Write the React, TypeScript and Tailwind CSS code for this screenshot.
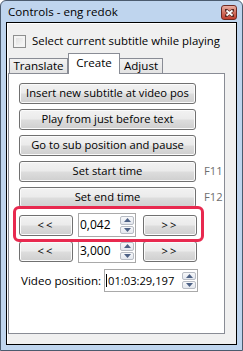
import React from "react";

const btnFace =
  "flex items-center justify-center rounded-[3px] border border-[#707070] bg-[linear-gradient(to_bottom,#f2f2f2_0%,#ebebeb_48%,#dddddd_52%,#cfcfcf_100%)] shadow-[inset_0_0_0_1px_#fbfbfb] text-black";

const WinButton = ({ children, className = "" }: { children: React.ReactNode; className?: string }) => (
  <div className={`${btnFace} ${className}`}>{children}</div>
);

const Spin = ({ className = "" }: { className?: string }) => (
  <div className={`flex flex-col gap-[1px] w-[14px] ${className}`}>
    <div className="flex-1 flex items-center justify-center rounded-[2px] border border-[#b8bcc4] bg-[linear-gradient(to_bottom,#f7f8fa,#e3e7ee)]">
      <svg width="7" height="4" viewBox="0 0 7 4">
        <path d="M0 4 L3.5 0 L7 4 Z" fill="#4d6185" />
      </svg>
    </div>
    <div className="flex-1 flex items-center justify-center rounded-[2px] border border-[#b8bcc4] bg-[linear-gradient(to_bottom,#f7f8fa,#e3e7ee)]">
      <svg width="7" height="4" viewBox="0 0 7 4">
        <path d="M0 0 L7 0 L3.5 4 Z" fill="#4d6185" />
      </svg>
    </div>
  </div>
);

const NumBox = ({ value, className = "" }: { value: string; className?: string }) => (
  <div className={`flex items-stretch justify-between border border-[#a9a9a9] bg-white pl-[1px] pr-[1px] py-[2px] ${className}`}>
    <span className="flex items-center leading-none text-[12px]">{value}</span>
    <Spin />
  </div>
);

const ShortcutRow = ({ label, keyName }: { label: string; keyName: string }) => (
  <div className="flex items-center">
    <WinButton className="w-[177px] h-[21px]">{label}</WinButton>
    <span className="ml-[8px] text-[#6e6e6e]">{keyName}</span>
  </div>
);

const StepRow = ({ value }: { value: string }) => (
  <div className="flex items-center">
    <WinButton className="w-[54px] h-[21px] tracking-[2px]">&lt;&lt;</WinButton>
    <NumBox value={value} className="ml-[5px] w-[58px] h-[24px]" />
    <WinButton className="ml-[7px] w-[54px] h-[21px] tracking-[2px]">&gt;&gt;</WinButton>
  </div>
);

export default function App() {
  return (
    <div className="w-[243px] h-[351px] flex flex-col border border-[#4b5b6e] rounded-t-[6px] bg-[#bfd5ee] px-[5px] pb-[5px] font-['Open_Sans',sans-serif] text-[11.2px] text-black">
      {/* title bar */}
      <div className="h-[21px] flex items-start justify-between">
        <span className="pl-[2px] pt-[3px] leading-[16px] text-[11.6px]">Controls - eng redok</span>
        <div className="mt-[4px] w-[16px] h-[15px] rounded-[3px] border border-[#6f2a22] bg-[linear-gradient(to_bottom,#eab0a4,#d0705f_50%,#c2402f)] flex items-center justify-center">
          <svg width="9" height="8" viewBox="0 0 9 8">
            <path d="M1 1 L8 7 M8 1 L1 7" stroke="#5a2a24" strokeWidth="3.2" strokeLinecap="square" />
            <path d="M1.5 1.5 L7.5 6.5 M7.5 1.5 L1.5 6.5" stroke="#ffffff" strokeWidth="1.8" />
          </svg>
        </div>
      </div>

      {/* client area */}
      <div className="flex-1 flex flex-col border border-black bg-[#f0f0f0] shadow-[inset_1px_1px_0_#ffffff]">
        <div className="mt-[11px] ml-[6px] flex items-center">
          <div className="w-[13px] h-[13px] border border-[#8e8f8f] bg-[linear-gradient(135deg,#dcdcdc,#fbfbfb)] shadow-[inset_0_0_0_2px_#f4f4f4]" />
          <span className="ml-[6px] leading-[14px] text-[11.4px]">Select current subtitle while playing</span>
        </div>

        {/* tabs */}
        <div className="mt-[5px] ml-[1px] flex items-end pl-[1px] h-[20px]">
          <div className="w-[59px] h-[15px] border border-b-0 border-[#898c95] bg-[linear-gradient(to_bottom,#f2f2f2,#e3e3e3)] flex items-center justify-center leading-none text-[11.6px]">
            Translate
          </div>
          <div className="relative z-10 w-[52px] h-[21px] -mb-[1px] border border-b-0 border-[#898c95] bg-white flex items-start justify-center pt-[3px] leading-none text-[11.6px]">
            Create
          </div>
          <div className="-ml-[1px] w-[44px] h-[15px] border border-b-0 border-[#898c95] bg-[linear-gradient(to_bottom,#f2f2f2,#e3e3e3)] flex items-center justify-center leading-none text-[11.6px]">
            Adjust
          </div>
        </div>

        {/* tab panel */}
        <div className="relative ml-[1px] w-[217px] h-[261px] border border-[#898c95] bg-white pt-[9px] pl-[10px] flex flex-col">
          <div className="flex flex-col gap-[5px]">
            <WinButton className="w-[177px] h-[21px]">Insert new subtitle at video pos</WinButton>
            <WinButton className="w-[177px] h-[21px]">Play from just before text</WinButton>
            <WinButton className="w-[177px] h-[21px]">Go to sub position and pause</WinButton>
            <ShortcutRow label="Set start time" keyName="F11" />
            <ShortcutRow label="Set end time" keyName="F12" />
          </div>

          <div className="mt-[5px] flex flex-col gap-[2px]">
            <StepRow value="0,042" />
            <StepRow value="3,000" />
          </div>

          <div className="mt-[6px] flex items-center">
            <span className="ml-[2px] w-[83px] text-[11.6px]">Video position:</span>
            <div className="w-[94px] h-[23px] flex items-stretch justify-between border border-[#a9a9a9] bg-white pl-[1px] pr-[1px] py-[2px]">
              <span className="flex items-center leading-none text-[11.2px]">
                <span className="w-[1px] h-[13px] bg-black mr-[1px]" />
                01:03:29,197
              </span>
              <Spin />
            </div>
          </div>

          {/* highlight annotation */}
          <div className="absolute left-[4px] top-[132px] w-[191px] h-[36px] rounded-[6px] border-[3px] border-[#e8294f]" />
        </div>
      </div>
    </div>
  );
}
